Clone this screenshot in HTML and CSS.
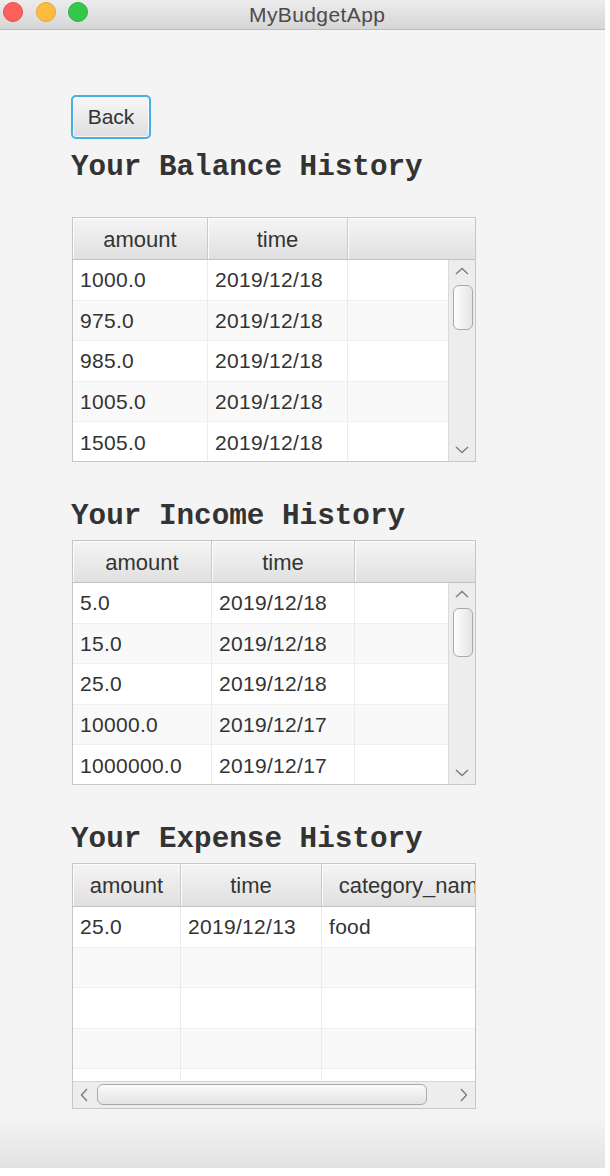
FILE: index.html
```html
<!DOCTYPE html>
<html>
<head>
<meta charset="utf-8">
<title>MyBudgetApp</title>
<link rel="stylesheet" href="styles.css">
</head>
<body>
<div class="window">
  <div class="titlebar">
    <div class="lights"><span class="light red"></span><span class="light yellow"></span><span class="light green"></span></div>
    <div class="title">MyBudgetApp</div>
  </div>
  <main class="content">
    <button class="back">Back</button>
    <h1 class="heading">Your Balance History</h1>
    <div class="table t1 first">
      <div class="thead">
        <div class="th c1">amount</div>
        <div class="th c2">time</div>
        <div class="th fill"></div>
      </div>
      <div class="tbody">
        <div class="rows">
          <div class="row"><div class="td c1">1000.0</div><div class="td c2">2019/12/18</div><div class="td fill"></div></div>
          <div class="row"><div class="td c1">975.0</div><div class="td c2">2019/12/18</div><div class="td fill"></div></div>
          <div class="row"><div class="td c1">985.0</div><div class="td c2">2019/12/18</div><div class="td fill"></div></div>
          <div class="row"><div class="td c1">1005.0</div><div class="td c2">2019/12/18</div><div class="td fill"></div></div>
          <div class="row"><div class="td c1">1505.0</div><div class="td c2">2019/12/18</div><div class="td fill"></div></div>
        </div>
        <div class="vscroll">
          <div class="arrow"><svg width="14" height="8" viewBox="0 0 14 8"><polyline points="1,7 7,1.5 13,7" fill="none" stroke="#7d7d7d" stroke-width="1.4"/></svg></div>
          <div class="vthumb"></div>
          <div class="spacer"></div>
          <div class="arrow"><svg width="14" height="8" viewBox="0 0 14 8"><polyline points="1,1 7,6.5 13,1" fill="none" stroke="#7d7d7d" stroke-width="1.4"/></svg></div>
        </div>
      </div>
    </div>

    <h1 class="heading later">Your Income History</h1>
    <div class="table t2">
      <div class="thead">
        <div class="th c1">amount</div>
        <div class="th c2">time</div>
        <div class="th fill"></div>
      </div>
      <div class="tbody">
        <div class="rows">
          <div class="row"><div class="td c1">5.0</div><div class="td c2">2019/12/18</div><div class="td fill"></div></div>
          <div class="row"><div class="td c1">15.0</div><div class="td c2">2019/12/18</div><div class="td fill"></div></div>
          <div class="row"><div class="td c1">25.0</div><div class="td c2">2019/12/18</div><div class="td fill"></div></div>
          <div class="row"><div class="td c1">10000.0</div><div class="td c2">2019/12/17</div><div class="td fill"></div></div>
          <div class="row"><div class="td c1">1000000.0</div><div class="td c2">2019/12/17</div><div class="td fill"></div></div>
        </div>
        <div class="vscroll">
          <div class="arrow"><svg width="14" height="8" viewBox="0 0 14 8"><polyline points="1,7 7,1.5 13,7" fill="none" stroke="#7d7d7d" stroke-width="1.4"/></svg></div>
          <div class="vthumb"></div>
          <div class="spacer"></div>
          <div class="arrow"><svg width="14" height="8" viewBox="0 0 14 8"><polyline points="1,1 7,6.5 13,1" fill="none" stroke="#7d7d7d" stroke-width="1.4"/></svg></div>
        </div>
      </div>
    </div>

    <h1 class="heading later">Your Expense History</h1>
    <div class="table t3">
      <div class="thead">
        <div class="th c1">amount</div>
        <div class="th c2">time</div>
        <div class="th c3">category_name</div>
      </div>
      <div class="tbody">
        <div class="rows">
          <div class="row"><div class="td c1">25.0</div><div class="td c2">2019/12/13</div><div class="td c3">food</div></div>
          <div class="row"><div class="td c1"></div><div class="td c2"></div><div class="td c3"></div></div>
          <div class="row"><div class="td c1"></div><div class="td c2"></div><div class="td c3"></div></div>
          <div class="row"><div class="td c1"></div><div class="td c2"></div><div class="td c3"></div></div>
          <div class="row"><div class="td c1"></div><div class="td c2"></div><div class="td c3"></div></div>
        </div>
      </div>
      <div class="hscroll">
        <div class="harrow"><svg width="8" height="14" viewBox="0 0 8 14"><polyline points="7,1 1.5,7 7,13" fill="none" stroke="#7d7d7d" stroke-width="1.4"/></svg></div>
        <div class="hthumb"></div>
        <div class="harrow right"><svg width="8" height="14" viewBox="0 0 8 14"><polyline points="1,1 6.5,7 1,13" fill="none" stroke="#7d7d7d" stroke-width="1.4"/></svg></div>
      </div>
    </div>
  </main>
  <div class="footer"></div>
</div>
</body>
</html>
```

FILE: styles.css
```css
body {
  margin: 0;
  background: #ffffff;
  font-family: "Liberation Sans", Arial, sans-serif;
}

.window {
  width: 605px;
  height: 1168px;
  display: flex;
  flex-direction: column;
  background: #f4f4f4;
}

.titlebar {
  height: 29px;
  flex-shrink: 0;
  border-bottom: 1px solid #bdbdbd;
  background: linear-gradient(#ececec, #d6d6d6);
  display: flex;
  align-items: flex-start;
  padding-left: 3px;
}

.lights {
  display: flex;
  gap: 12.5px;
  margin-top: 2px;
}

.light {
  width: 20px;
  height: 20px;
  border-radius: 50%;
  box-sizing: border-box;
}

.red { background: #fc605c; border: 1px solid #e5504a; }
.yellow { background: #fdbc40; border: 1px solid #e6a532; }
.green { background: #34c84a; border: 1px solid #2bb03e; }

.title {
  margin-left: 161px;
  font-size: 21px;
  line-height: 29px;
  letter-spacing: 0.4px;
  color: #4b4b4b;
}

.content {
  flex: 1;
  padding: 65px 0 0 71px;
  display: flex;
  flex-direction: column;
  align-items: flex-start;
}

.footer {
  height: 51px;
  flex-shrink: 0;
  background: linear-gradient(#f4f4f4, #e2e2e2);
}

.back {
  width: 80px;
  height: 44px;
  padding: 0;
  border: 2px solid #4aaede;
  border-radius: 5px;
  background: linear-gradient(#f8f8f8, #dedede);
  box-shadow: inset 0 0 0 1px rgba(255, 255, 255, 0.7);
  font-family: "Liberation Sans", Arial, sans-serif;
  font-size: 21px;
  color: #333333;
}

.heading {
  margin: 12px 0 0 0;
  font-family: "Courier New", "Liberation Mono", monospace;
  font-weight: bold;
  font-size: 29.3px;
  line-height: 34px;
  color: #333333;
}

.heading.later {
  margin-top: 38px;
}

.table {
  margin: 6px 0 0 1px;
  width: 404px;
  height: 245px;
  box-sizing: border-box;
  border: 1px solid #c6c6c6;
  background: #ffffff;
  display: flex;
  flex-direction: column;
  overflow: hidden;
}

.table.first {
  margin-top: 32px;
}

.table.t3 {
  height: 246px;
}

.thead {
  display: flex;
  height: 42px;
  flex-shrink: 0;
  box-sizing: border-box;
  border-bottom: 1px solid #c2c2c2;
}

.t3 .thead {
  height: 43px;
}

.th {
  box-sizing: border-box;
  flex-shrink: 0;
  border-right: 1px solid #c9c9c9;
  background: linear-gradient(#f5f5f5, #e0e0e0);
  box-shadow: inset 1px 1px 0 #fcfcfc;
  display: flex;
  align-items: center;
  justify-content: center;
  padding-top: 2px;
  font-size: 22px;
  color: #343434;
  white-space: nowrap;
}

.th.fill {
  flex: 1;
  border-right: 0;
}

.tbody {
  flex: 1;
  display: flex;
  min-height: 0;
}

.rows {
  flex: 1;
  min-width: 0;
  overflow: hidden;
}

.row {
  display: flex;
  height: 40.6px;
  box-sizing: border-box;
  border-bottom: 1px solid #efefef;
}

.row:nth-child(even) {
  background: #f9f9f9;
}

.td {
  box-sizing: border-box;
  flex-shrink: 0;
  border-right: 1px solid #ebebeb;
  display: flex;
  align-items: center;
  padding: 1px 0 0 7px;
  font-size: 21px;
  letter-spacing: 0.3px;
  color: #333333;
  white-space: nowrap;
}

.td.fill {
  flex: 1;
  border-right: 0;
}

.t1 .c1 { width: 135px; }
.t1 .c2 { width: 140px; }
.t2 .c1 { width: 139px; }
.t2 .c2 { width: 143px; }
.t3 .c1 { width: 108px; }
.t3 .c2 { width: 141px; }
.t3 .c3 { width: 186px; }

.vscroll {
  width: 27px;
  flex-shrink: 0;
  box-sizing: border-box;
  border-left: 1px solid #dadada;
  background: #ededed;
  display: flex;
  flex-direction: column;
}

.arrow {
  height: 22px;
  flex-shrink: 0;
  display: flex;
  align-items: center;
  justify-content: center;
}

.vthumb {
  margin: 3px 2px 0 4px;
  height: 45px;
  flex-shrink: 0;
  box-sizing: border-box;
  border: 1px solid #a9a9a9;
  border-radius: 6px;
  background: linear-gradient(90deg, #fdfdfd, #e5e5e5);
}

.t2 .vthumb {
  height: 49px;
}

.spacer {
  flex: 1;
}

.hscroll {
  height: 27px;
  flex-shrink: 0;
  box-sizing: border-box;
  border-top: 1px solid #d4d4d4;
  background: #ededed;
  display: flex;
  align-items: flex-start;
}

.harrow {
  width: 22px;
  height: 26px;
  display: flex;
  align-items: center;
  justify-content: center;
}

.harrow.right {
  margin-left: auto;
}

.hthumb {
  width: 330px;
  height: 21px;
  margin: 2px 0 0 2px;
  box-sizing: border-box;
  border: 1px solid #a9a9a9;
  border-radius: 6px;
  background: linear-gradient(#fbfbfb, #e3e3e3);
}
```
